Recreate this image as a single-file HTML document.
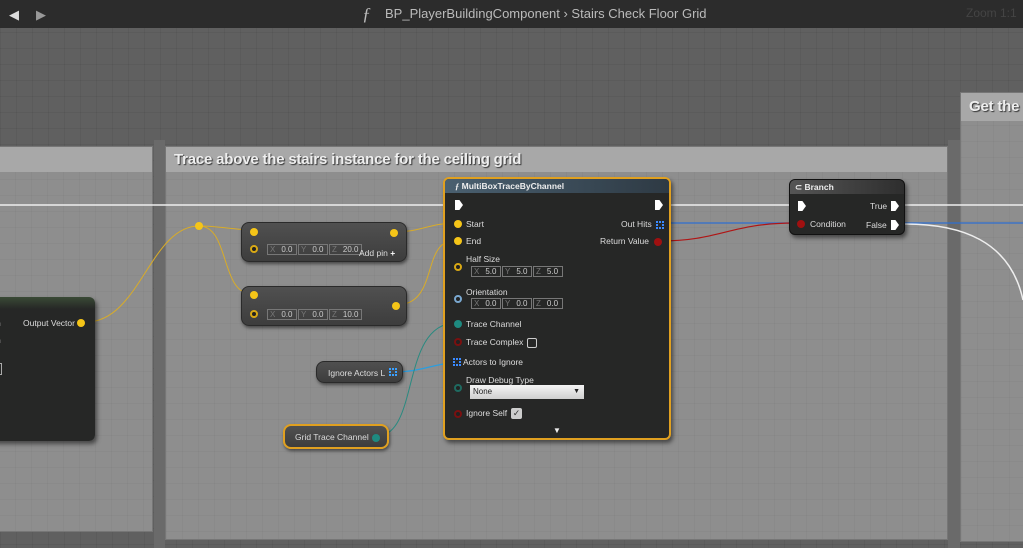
<!DOCTYPE html>
<html><head><style>
*{margin:0;padding:0;box-sizing:border-box}
body{width:1023px;height:548px;overflow:hidden;background:#606060;font-family:"Liberation Sans",sans-serif;position:relative;
background-image:linear-gradient(rgba(0,0,0,.05) 1px,transparent 1px),linear-gradient(90deg,rgba(0,0,0,.05) 1px,transparent 1px);background-size:16px 16px}
.abs{position:absolute}
.top{left:0;top:0;width:1023px;height:28px;background:#2c2c2c}
.cm{background:#8e8e8e;border:1px solid #767676;background-image:linear-gradient(rgba(0,0,0,.03) 1px,transparent 1px),linear-gradient(90deg,rgba(0,0,0,.03) 1px,transparent 1px);background-size:16px 16px}
.ct{background:#a8a8a8;height:25px;color:#eee;font-weight:bold;font-size:15px;line-height:25px;padding-left:8px;text-shadow:1px 1px 1px #333;letter-spacing:-.2px}
.node{background:#262726;border-radius:6px;box-shadow:2px 3px 4px rgba(0,0,0,.5)}
.gn{background:linear-gradient(#505050,#3d3d3d);border-radius:8px;box-shadow:1px 2px 3px rgba(0,0,0,.5);border:1px solid #2a2a2a}
.t{position:absolute;color:#ddd;font-size:8.5px;white-space:nowrap}
.pin{position:absolute;width:8px;height:8px;border-radius:50%}
.y{background:#f5c518}
.yo{border:2px solid #d9a915;background:#222}
.box{position:absolute;height:11px;border:1px solid #777;color:#ccc;font-size:8px;line-height:9px;padding-left:2px;width:30px}
.box span{color:#777;margin-right:6px}
.ex{position:absolute;width:8px;height:10px;background:#fff;clip-path:polygon(0 0,55% 0,100% 50%,55% 100%,0 100%)}
</style></head><body>
<div class="abs top"></div>
<div class="abs" style="left:9px;top:7px;color:#ddd;font-size:13px">&#9664;</div>
<div class="abs" style="left:36px;top:7px;color:#999;font-size:13px">&#9654;</div>
<div class="abs" style="left:362px;top:4px;color:#bbb;font:italic 18px 'Liberation Serif',serif">ƒ</div>
<div class="abs" style="left:385px;top:6px;color:#bbb;font-size:13px">BP_PlayerBuildingComponent &rsaquo; Stairs Check Floor Grid</div>
<div class="abs" style="left:966px;top:6px;color:#444;font-size:12px">Zoom 1:1</div>

<div class="abs" style="left:154px;top:140px;width:11px;height:408px;background:#6a6a6a"></div>
<div class="abs" style="left:948px;top:140px;width:12px;height:408px;background:#6a6a6a"></div>
<div class="abs cm" style="left:-2px;top:146px;width:155px;height:386px"><div class="ct"></div></div>
<div class="abs cm" style="left:165px;top:146px;width:783px;height:394px"><div class="ct">Trace above the stairs instance for the ceiling grid</div></div>
<div class="abs cm" style="left:960px;top:92px;width:70px;height:450px"><div class="ct" style="height:28px;line-height:28px">Get the</div></div>

<svg class="abs" style="left:0;top:0" width="1023" height="548">
<line x1="0" y1="205" x2="1023" y2="205" stroke="#eee" stroke-width="1.5"/>
<line x1="660" y1="223" x2="1023" y2="223" stroke="#2f6fd0" stroke-width="1.2"/>
<path d="M660 241 C720 241,730 223,795 223" stroke="#b01515" fill="none" stroke-width="1.2"/>
<path d="M905 224 C960 224,1010 240,1023 300" stroke="#eee" fill="none" stroke-width="1.5"/>
<path d="M86 322 C140 322,150 226,199 226" stroke="#d9ac28" fill="none"/>
<path d="M199 226 C220 226,235 230,252 230" stroke="#d9ac28" fill="none"/>
<path d="M199 226 C230 226,220 294,252 294" stroke="#d9ac28" fill="none"/>
<path d="M396 232 C420 232,430 223,456 223" stroke="#d9ac28" fill="none"/>
<path d="M396 305 C440 305,420 240,456 240" stroke="#d9ac28" fill="none"/>
<path d="M393 372 C420 372,430 365,456 362" stroke="#2a9ee0" fill="none" stroke-width="1.2"/>
<path d="M377 436 C420 436,400 323,456 323" stroke="#2a8a80" fill="none"/>
<circle cx="199" cy="226" r="4" fill="#f5c518"/>
</svg>

<div class="abs node" style="left:-10px;top:297px;width:105px;height:144px;background:linear-gradient(#3a4a36 0,#262726 12px)">
<div class="t" style="left:33px;top:21px">Output Vector</div>
<div class="t" style="left:6px;top:21px">n</div><div class="t" style="left:6px;top:38px">n</div>
<div class="pin y" style="left:87px;top:22px"></div>
<div class="abs" style="left:6px;top:66px;width:6px;height:12px;border:1px solid #aaa;border-left:none"></div>
</div>

<div class="abs gn" style="left:241px;top:222px;width:166px;height:40px">
<div class="pin y" style="left:8px;top:5px"></div><div class="pin yo" style="left:8px;top:22px"></div>
<div class="pin y" style="left:148px;top:6px"></div>
<div class="box" style="left:25px;top:21px"><span>X</span>0.0</div>
<div class="box" style="left:56px;top:21px"><span>Y</span>0.0</div>
<div class="box" style="left:87px;top:21px;width:33px"><span>Z</span>20.0</div>
<div class="t" style="left:117px;top:25px">Add pin <b style="color:#fff">+</b></div>
</div>
<div class="abs gn" style="left:241px;top:286px;width:166px;height:40px">
<div class="pin y" style="left:8px;top:4px"></div><div class="pin yo" style="left:8px;top:23px"></div>
<div class="pin y" style="left:150px;top:15px"></div>
<div class="box" style="left:25px;top:22px"><span>X</span>0.0</div>
<div class="box" style="left:56px;top:22px"><span>Y</span>0.0</div>
<div class="box" style="left:87px;top:22px;width:33px"><span>Z</span>10.0</div>
</div>

<div class="abs gn" style="left:316px;top:361px;width:87px;height:22px">
<div class="t" style="left:11px;top:6px">Ignore Actors L</div>
<div class="abs" style="left:72px;top:6px;width:8px;height:8px;border:2px dotted #3aa0ff"></div></div>
<div class="abs gn" style="left:283px;top:424px;width:106px;height:25px;border:2px solid #e0a020">
<div class="t" style="left:10px;top:6px">Grid Trace Channel</div>
<div class="pin" style="left:87px;top:8px;background:#1e8a80"></div></div>

<div class="abs node" style="left:443px;top:177px;width:228px;height:263px;border:2px solid #e0a020">
<div style="height:14px;background:linear-gradient(90deg,#4a6070,#2e3a44);border-radius:4px 4px 0 0"></div>
<div class="t" style="left:10px;top:2px;font-weight:bold;color:#eee"><i style="font-family:'Liberation Serif'">ƒ</i> MultiBoxTraceByChannel</div>
<div class="ex" style="left:10px;top:21px"></div><div class="ex" style="left:210px;top:21px"></div>
<div class="pin y" style="left:9px;top:41px"></div><div class="t" style="left:21px;top:40px">Start</div>
<div class="pin y" style="left:9px;top:58px"></div><div class="t" style="left:21px;top:57px">End</div>
<div class="t" style="left:176px;top:40px">Out Hits</div>
<div class="abs" style="left:211px;top:42px;width:8px;height:8px;border:2px dotted #3a8aff"></div>
<div class="t" style="left:155px;top:57px">Return Value</div><div class="pin" style="left:209px;top:59px;background:#a01010"></div>
<div class="t" style="left:21px;top:75px">Half Size</div><div class="pin yo" style="left:9px;top:84px"></div>
<div class="box" style="left:26px;top:87px"><span>X</span>5.0</div>
<div class="box" style="left:57px;top:87px"><span>Y</span>5.0</div>
<div class="box" style="left:88px;top:87px"><span>Z</span>5.0</div>
<div class="t" style="left:21px;top:108px">Orientation</div><div class="pin" style="left:9px;top:116px;border:2px solid #7aa8d0;background:#222"></div>
<div class="box" style="left:26px;top:119px"><span>X</span>0.0</div>
<div class="box" style="left:57px;top:119px"><span>Y</span>0.0</div>
<div class="box" style="left:88px;top:119px"><span>Z</span>0.0</div>
<div class="pin" style="left:9px;top:141px;background:#1e8a80"></div><div class="t" style="left:21px;top:140px">Trace Channel</div>
<div class="pin" style="left:9px;top:159px;border:2px solid #7a1010;background:#222"></div><div class="t" style="left:21px;top:158px">Trace Complex</div>
<div class="abs" style="left:82px;top:159px;width:10px;height:10px;border:1.5px solid #ccc;border-radius:2px"></div>
<div class="abs" style="left:8px;top:179px;width:8px;height:8px;border:2px dotted #3a8aff"></div><div class="t" style="left:18px;top:178px">Actors to Ignore</div>
<div class="t" style="left:21px;top:196px">Draw Debug Type</div><div class="pin" style="left:9px;top:205px;border:2px solid #1e6a60;background:#222"></div>
<div class="abs" style="left:25px;top:206px;width:114px;height:14px;background:linear-gradient(#f4f4f4,#cfcfcf);font-size:8px;line-height:14px;padding-left:3px;color:#222">None<span style="position:absolute;right:4px;font-size:7px">&#9660;</span></div>
<div class="pin" style="left:9px;top:231px;border:2px solid #7a1010;background:#222"></div><div class="t" style="left:21px;top:229px">Ignore Self</div>
<div class="abs" style="left:66px;top:229px;width:11px;height:11px;background:#ccc;border-radius:2px;color:#333;font-size:9px;line-height:11px;text-align:center">&#10003;</div>
<div class="t" style="left:108px;top:247px;color:#eee;font-size:8px">&#9660;</div>
</div>

<div class="abs node" style="left:789px;top:179px;width:116px;height:56px;border:1px solid #111">
<div style="height:14px;background:linear-gradient(90deg,#555,#2e2e2e);border-radius:5px 5px 0 0"></div>
<div class="t" style="left:5px;top:2px;color:#eee;font-weight:bold">&#8834; Branch</div>
<div class="ex" style="left:8px;top:21px"></div>
<div class="t" style="left:80px;top:21px">True</div><div class="ex" style="left:101px;top:21px"></div>
<div class="pin" style="left:7px;top:40px;background:#a01010"></div><div class="t" style="left:20px;top:39px">Condition</div>
<div class="t" style="left:76px;top:40px">False</div><div class="ex" style="left:101px;top:40px"></div>
</div>
</body></html>
